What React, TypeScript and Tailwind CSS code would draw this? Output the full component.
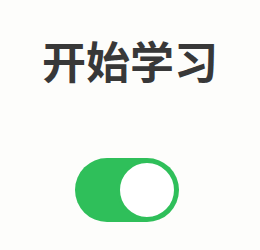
export default function App() {
  return (
    <div className="w-[260px] h-[250px] bg-[#fdfdfb] flex flex-col items-center pt-[38px]">
      <h1
        className="text-[44px] leading-none font-bold text-[#383838] tracking-[0px]"
        style={{ fontFamily: '"Noto Sans CJK SC", sans-serif' }}
      >
        开始学习
      </h1>
      <div className="mt-[76px] mr-[6px] w-[104px] h-[64px] rounded-full bg-[#2fbf5a] flex items-center justify-end pr-[2px]">
        <div className="w-[60px] h-[60px] rounded-full bg-white border-[3px] border-[#2fbf5a]" />
      </div>
    </div>
  );
}
